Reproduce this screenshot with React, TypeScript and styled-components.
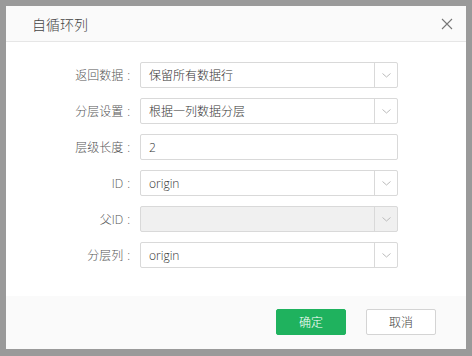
import styled, { createGlobalStyle } from "styled-components";

const GlobalStyle = createGlobalStyle`
  html, body {
    margin: 0;
    padding: 0;
    background: #9a9a9a;
    font-family: "Open Sans", "Noto Sans CJK SC", sans-serif;
  }
`;

const Backdrop = styled.div`
  width: 472px;
  height: 356px;
  padding: 6px;
  box-sizing: border-box;
  background: #9a9a9a;
`;

const Dialog = styled.div`
  width: 460px;
  height: 343px;
  background: #fff;
  display: flex;
  flex-direction: column;
`;

const Header = styled.div`
  height: 35px;
  flex-shrink: 0;
  display: flex;
  align-items: center;
  justify-content: space-between;
  padding: 0 13px 0 26px;
  background: #fafafa;
  border-bottom: 1px solid #e6e6e6;
`;

const Title = styled.span`
  font-size: 14px;
  font-weight: 300;
  color: #444;
`;

const CloseButton = styled.button`
  border: none;
  background: none;
  padding: 0;
  width: 12px;
  height: 12px;
  display: flex;
  cursor: pointer;
`;

const Body = styled.div`
  flex: 1;
  padding: 20px 0 0;
  display: flex;
  flex-direction: column;
  gap: 10px;
`;

const Row = styled.div`
  display: flex;
  align-items: center;
  height: 26px;
`;

const Label = styled.label`
  width: 134px;
  padding-right: 10px;
  box-sizing: border-box;
  text-align: right;
  font-size: 12px;
  font-weight: 300;
  color: #555;
  white-space: nowrap;
`;

const Colon = styled.span`
  margin-left: 4px;
`;

const Field = styled.div<{ $disabled?: boolean }>`
  width: 258px;
  height: 26px;
  box-sizing: border-box;
  border: 1px solid #d9d9d9;
  border-radius: 2px;
  background: ${(p) => (p.$disabled ? "#f0f0f0" : "#fff")};
  display: flex;
  align-items: stretch;
`;

const Value = styled.div`
  flex: 1;
  display: flex;
  align-items: center;
  padding-left: 8px;
  font-size: 12px;
  font-weight: 300;
  color: #333;
`;

const Arrow = styled.div`
  width: 22px;
  border-left: 1px solid #d9d9d9;
  display: flex;
  align-items: center;
  justify-content: center;
`;

const Footer = styled.div`
  height: 51px;
  flex-shrink: 0;
  background: #fafafa;
  display: flex;
  align-items: center;
  justify-content: flex-end;
  gap: 20px;
  padding: 0 30px 2px 0;
`;

const Button = styled.button<{ $primary?: boolean }>`
  width: 70px;
  height: 26px;
  border-radius: 2px;
  font-family: "Open Sans", "Noto Sans CJK SC", sans-serif;
  font-size: 12px;
  font-weight: 300;
  cursor: pointer;
  border: 1px solid ${(p) => (p.$primary ? "#1fb25e" : "#d4d4d4")};
  background: ${(p) => (p.$primary ? "#1fb25e" : "#fff")};
  color: ${(p) => (p.$primary ? "#fff" : "#444")};
`;

const Chevron = () => (
  <svg width="9" height="5" viewBox="0 0 9 5">
    <path d="M0.5 0.5 L4.5 4 L8.5 0.5" fill="none" stroke="#bbb" strokeWidth="1" />
  </svg>
);

const rows = [
  { label: "返回数据", value: "保留所有数据行", select: true },
  { label: "分层设置", value: "根据一列数据分层", select: true },
  { label: "层级长度", value: "2", select: false },
  { label: "ID", value: "origin", select: true },
  { label: "父ID", value: "", select: true, disabled: true },
  { label: "分层列", value: "origin", select: true },
];

export default function App() {
  return (
    <>
      <GlobalStyle />
      <Backdrop>
        <Dialog>
          <Header>
            <Title>自循环列</Title>
            <CloseButton>
              <svg width="12" height="12" viewBox="0 0 12 12">
                <path d="M1 1 L11 11 M11 1 L1 11" stroke="#777" strokeWidth="1.1" />
              </svg>
            </CloseButton>
          </Header>
          <Body>
            {rows.map((r) => (
              <Row key={r.label}>
                <Label>
                  {r.label}
                  <Colon>:</Colon>
                </Label>
                <Field $disabled={r.disabled}>
                  <Value>{r.value}</Value>
                  {r.select && (
                    <Arrow>
                      <Chevron />
                    </Arrow>
                  )}
                </Field>
              </Row>
            ))}
          </Body>
          <Footer>
            <Button $primary>确定</Button>
            <Button>取消</Button>
          </Footer>
        </Dialog>
      </Backdrop>
    </>
  );
}
